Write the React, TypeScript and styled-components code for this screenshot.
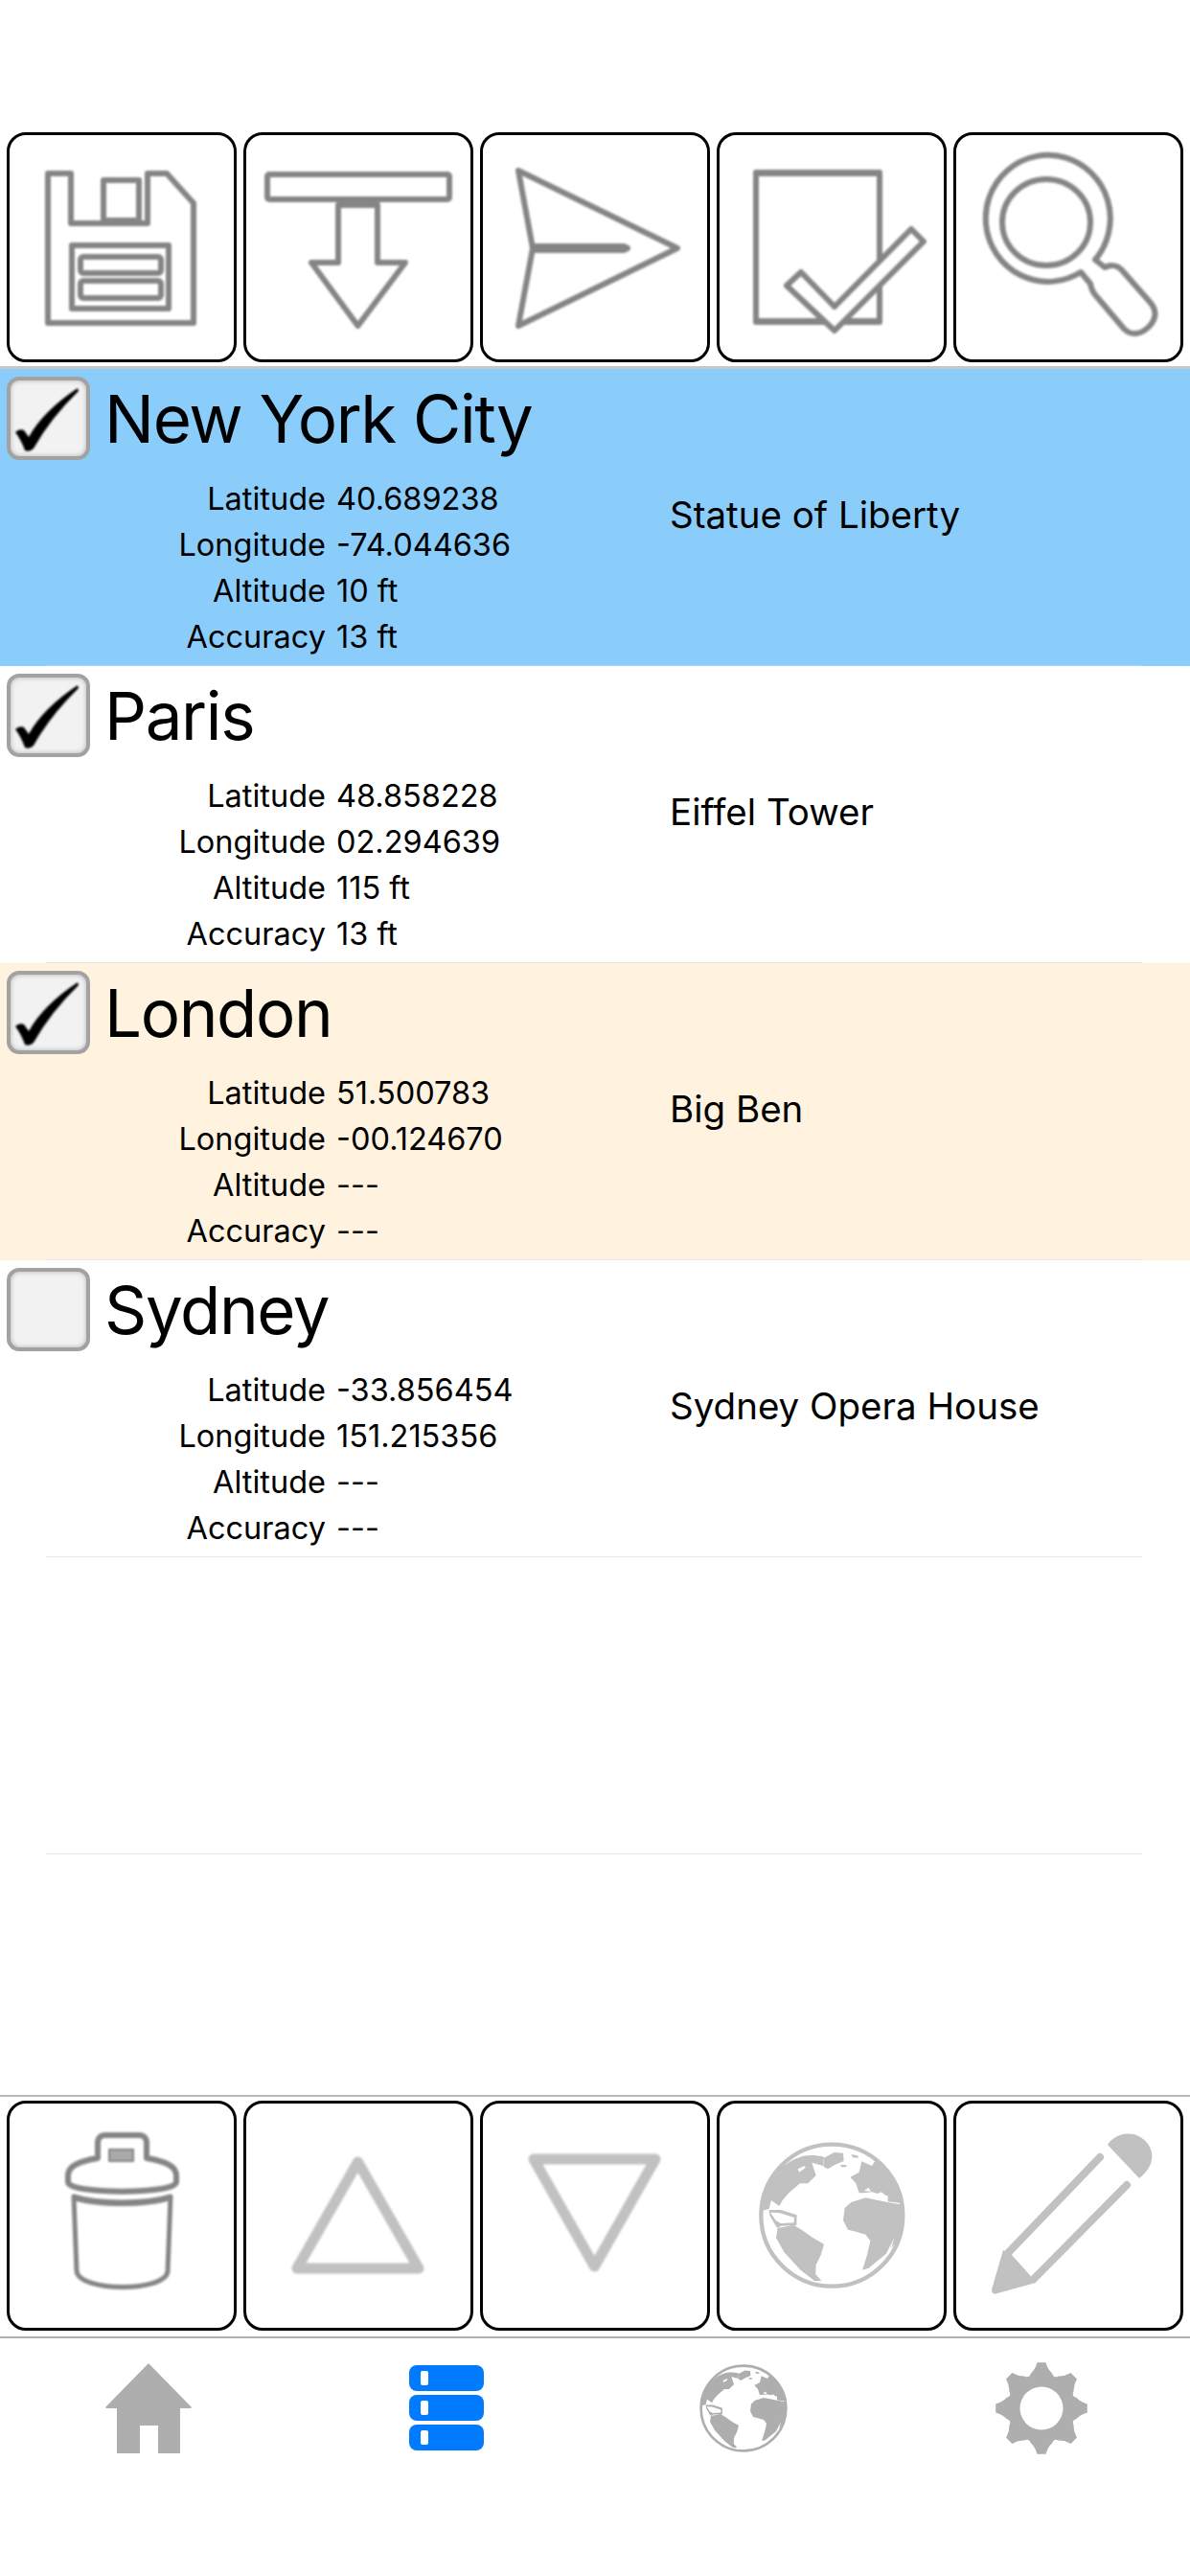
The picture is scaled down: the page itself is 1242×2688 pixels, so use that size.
import React from "react";
import styled, { createGlobalStyle } from "styled-components";

const Global = createGlobalStyle`
  html, body { margin: 0; padding: 0; background: #fff; }
  body { font-family: Inter, "Liberation Sans", sans-serif; color: #000; }
`;

const Page = styled.div`
  width: 1242px;
  height: 2688px;
  display: flex;
  flex-direction: column;
  background: #fff;
  overflow: hidden;
`;

const TopToolbar = styled.div`
  display: flex;
  gap: 7px;
  padding: 138px 7px 4px;
  border-bottom: 3px solid #c6c8c8;
`;

const BottomToolbar = styled.div`
  display: flex;
  gap: 7px;
  padding: 4px 7px 6px;
  border-top: 2px solid #b4bab8;
`;

const ToolButton = styled.button`
  width: 240px;
  height: 240px;
  padding: 0;
  flex: none;
  border: 3px solid #000;
  border-radius: 20px;
  background: #fff;
  display: block;
`;

const ToolIcon = styled.svg.attrs({ viewBox: "3 3 234 234" })<{ $soft?: number }>`
  display: block;
  width: 234px;
  height: 234px;
  filter: blur(${(p) => p.$soft ?? 1}px);
`;

const List = styled.div`
  flex: 1;
  display: flex;
  flex-direction: column;
`;

const Row = styled.div<{ $bg?: string }>`
  height: 310px;
  display: flex;
  flex-direction: column;
  background: ${(p) => p.$bg ?? "transparent"};
`;

const RowBody = styled.div`
  flex: 1;
`;

const RowDivider = styled.div<{ $tint?: string }>`
  height: 1px;
  margin: 0 50px 0 48px;
  background: ${(p) => p.$tint ?? "#e6e6e6"};
`;

const Header = styled.div`
  display: flex;
  align-items: center;
  gap: 15px;
  padding: 8px 0 0 7px;
  height: 87px;
`;

const CheckBox = styled.div`
  width: 87px;
  height: 87px;
  box-sizing: border-box;
  flex: none;
  border: 4px solid #a2a2a2;
  border-radius: 13px;
  background: #f2f2f2;
  box-shadow: inset 0 0 5px rgba(120, 120, 120, 0.55);
`;

const CheckMark = styled.svg.attrs({ viewBox: "4 4 79 79" })`
  display: block;
  width: 79px;
  height: 79px;
  filter: blur(0.8px);
`;

const Title = styled.div`
  font-size: 69px;
  line-height: 87px;
  padding-top: 2px;
  letter-spacing: -1.35px;
`;

const Details = styled.div`
  display: flex;
  padding-top: 16px;
`;

const Coords = styled.div`
  width: 699px;
  flex: none;
  display: grid;
  grid-template-columns: 340px 1fr;
  column-gap: 11px;
  grid-auto-rows: 48px;
  align-items: center;
  font-size: 32.5px;
`;

const Label = styled.div`
  text-align: right;
`;

const Value = styled.div``;

const Landmark = styled.div`
  font-size: 38.5px;
  line-height: 48px;
  padding-top: 17px;
`;

const TabBar = styled.div`
  display: grid;
  grid-template-columns: repeat(4, 1fr);
  height: 250px;
  padding-top: 25px;
  box-sizing: border-box;
  border-top: 2px solid #b0b0b0;
`;

const Tab = styled.div`
  display: flex;
  justify-content: center;
  align-items: flex-start;
`;

const TabIcon = styled.svg<{ $w: number; $h: number }>`
  display: block;
  width: ${(p) => p.$w}px;
  height: ${(p) => p.$h}px;
`;

const GRAY = "#858585";
const LIGHT = "#c1c1c1";
const TAB_GRAY = "#aeaeae";

const line = { fill: "#fff", stroke: GRAY, strokeWidth: 6, strokeLinejoin: "round" as const };

const SaveIcon = () => (
  <ToolIcon>
    <path {...line} d="M43 43 H67 V95 H147 V43 H167 L195 74 V199 H43 Z" />
    <rect {...line} x="101" y="50" width="37" height="42" />
    <rect {...line} x="68" y="118" width="101" height="66" />
    <rect {...line} x="77" y="130" width="84" height="17" rx="3" />
    <rect {...line} x="77" y="155" width="84" height="18" rx="3" />
  </ToolIcon>
);

const DownloadIcon = () => (
  <ToolIcon>
    <rect {...line} x="25" y="44" width="190" height="26" rx="2" />
    <rect x="98" y="69" width="44" height="9" fill={GRAY} />
    <path {...line} d="M99 76 H140 V136 H169 L119.5 202 L71 136 H99 Z" />
  </ToolIcon>
);

const SendIcon = () => (
  <ToolIcon>
    <path {...line} d="M40 40 L206 121 L40 202 L55 121 Z" />
    <path d="M55 119 H150 L154 121 L150 123 H55 Z" fill={GRAY} stroke={GRAY} strokeWidth="6" strokeLinejoin="round" />
  </ToolIcon>
);

const NoteCheckIcon = () => (
  <ToolIcon>
    <rect {...line} x="41" y="42" width="129" height="156" />
    <rect x="40" y="39" width="131" height="7" fill={GRAY} />
    <rect x="40" y="194" width="131" height="6" fill={GRAY} />
    <path {...line} d="M88 146 L73 160 L123 207 L216 114 L203 101 L123 182 Z" />
  </ToolIcon>
);

const SearchIcon = () => (
  <ToolIcon>
    <path
      {...line}
      d="M148 133 A65 66 0 1 0 133 146 L143 158 C144 164 146 168 150 172 L178 205 C186 213 196 211 204 203 C212 195 213 186 205 177 L176 144 C170 137 162 139 158 141 Z"
    />
    <ellipse {...line} cx="97" cy="94" rx="46" ry="45" />
  </ToolIcon>
);

const TrashIcon = () => (
  <ToolIcon>
    <path {...line} strokeWidth="5" d="M70 100 C95 108 145 108 171 100 L168 178 C166 200 76 200 73 178 Z" />
    <path d="M70 98 C95 106 145 106 171 98 L171 104 C145 112 95 112 70 104 Z" fill={GRAY} />
    <path {...line} d="M95 60 V44 C95 39 98 36 103 36 H138 C143 36 146 39 146 44 V60 C165 63 177 68 177 78 V85 C177 98 64 98 64 85 V78 C64 68 76 63 95 60 Z" />
    <rect x="107" y="51" width="25" height="12" fill="#aaa" stroke={GRAY} strokeWidth="2" />
  </ToolIcon>
);

const triangle = { fill: "none", stroke: LIGHT, strokeWidth: 11, strokeLinejoin: "round" as const };

const UpIcon = () => (
  <ToolIcon $soft={1.3}>
    <path {...triangle} d="M119.5 64 L183 175 H56 Z" />
  </ToolIcon>
);

const DownIcon = () => (
  <ToolIcon $soft={1.3}>
    <path {...triangle} d="M56 61 H183 L119.5 173 Z" />
  </ToolIcon>
);

const GlobeShapes = ({ color }: { color: string }) => (
  <g fill={color}>
    <circle cx="325" cy="305" r="222" fill="none" stroke={color} strokeWidth="13" />
    <path d="M222 124 C240 116 270 114 300 122 L297 150 L262 140 L275 180 L250 205 L225 205 L190 235 L170 258 L160 276 L135 258 L128 285 L102 292 C100 225 150 150 222 124 Z" />
    <path d="M300 125 L332 108 L360 110 L362 135 L335 146 L312 160 L298 152 Z" />
    <path d="M352 146 L372 148 L368 154 L354 154 Z" />
    <path d="M385 114 L405 118 L408 125 L390 124 Z" />
    <path d="M128 288 L165 288 L215 304 L214 336 L165 338 L155 345 L150 340 L130 305 Z" />
    <path d="M155 345 L205 335 L230 350 L265 375 L300 395 L290 430 L275 460 L274 490 L292 510 L270 510 L225 475 L175 420 L150 375 Z" />
    <path d="M418 136 L450 150 L462 132 L490 160 L520 200 L545 250 L548 268 L500 262 L500 244 L470 238 L450 232 L425 235 L410 235 L400 205 L382 185 L410 170 Z" />
    <path d="M360 320 L365 282 L385 264 L430 250 L470 258 L500 264 L548 272 C552 310 545 350 528 385 L510 410 L520 375 L495 425 L440 470 L420 476 L435 430 L445 385 L430 365 L395 355 L375 350 Z" />
    <path d="M132 296 L162 298 L207 312 L206 328 L165 330 L150 322 Z" fill="#fff" />
    <path d="M218 160 L240 150 L242 156 L222 170 Z" fill="#fff" />
    <path d="M425 228 L440 218 L447 230 Z" fill="#fff" />
    <path d="M460 240 L480 232 L500 250 L470 252 Z" fill="#fff" />
  </g>
);

const GlobeIcon = () => (
  <ToolIcon $soft={0.5}>
    <g transform="translate(12 18) scale(0.3333)">
      <GlobeShapes color={LIGHT} />
    </g>
  </ToolIcon>
);

const PencilIcon = () => (
  <ToolIcon $soft={0.4}>
    <path d="M161 46 C168 34 190 28 203 45 C212 58 206 72 194 81 Z" fill={LIGHT} />
    <path d="M153 59 L56 160 M181 88 L84 186" stroke={LIGHT} strokeWidth="8" strokeLinecap="round" fill="none" />
    <path d="M52 156 L40 197 Q40 203 46 201 L86 190 L79 181 L61 161 Z" fill={LIGHT} />
  </ToolIcon>
);

const Check = () => (
  <CheckMark>
    <path d="M9 58 Q13 54 18 56 L23 63 Q38 36 74 12 L75 15 Q46 43 28 75 Q24 79 19 77 Q15 66 9 58 Z" fill="#000" />
  </CheckMark>
);

function gearPath(cx: number, cy: number) {
  const pt = (r: number, a: number) =>
    `${(cx + r * Math.cos(a)).toFixed(2)} ${(cy + r * Math.sin(a)).toFixed(2)}`;
  const step = Math.PI / 4;
  let d = "";
  for (let i = 0; i < 8; i++) {
    const a = i * step - Math.PI / 2;
    const tipA = 0.095;
    d += `${i === 0 ? "M" : "L"}${pt(48, a - tipA)} L${pt(48, a + tipA)} `;
    d += `Q${pt(41, a + 0.16)} ${pt(38, a + 0.3)} Q${pt(33.5, a + step / 2)} ${pt(38, a + step - 0.3)} Q${pt(41, a + step - 0.16)} ${pt(48, a + step - tipA)} `;
  }
  d += `Z M${cx + 22.5} ${cy} A22.5 22.5 0 1 0 ${cx - 22.5} ${cy} A22.5 22.5 0 1 0 ${cx + 22.5} ${cy} Z`;
  return d;
}

type Place = {
  title: string;
  lat: string;
  lon: string;
  alt: string;
  acc: string;
  landmark: string;
  checked: boolean;
  bg?: string;
  divider?: string;
};

const places: Place[] = [
  { title: "New York City", lat: "40.689238", lon: "-74.044636", alt: "10 ft", acc: "13 ft", landmark: "Statue of Liberty", checked: true, bg: "#8acdfb", divider: "#a5d5f5" },
  { title: "Paris", lat: "48.858228", lon: "02.294639", alt: "115 ft", acc: "13 ft", landmark: "Eiffel Tower", checked: true },
  { title: "London", lat: "51.500783", lon: "-00.124670", alt: "---", acc: "---", landmark: "Big Ben", checked: true, bg: "#fff3e0" },
  { title: "Sydney", lat: "-33.856454", lon: "151.215356", alt: "---", acc: "---", landmark: "Sydney Opera House", checked: false },
];

export default function App() {
  return (
    <Page>
      <Global />
      <TopToolbar>
        <ToolButton><SaveIcon /></ToolButton>
        <ToolButton><DownloadIcon /></ToolButton>
        <ToolButton><SendIcon /></ToolButton>
        <ToolButton><NoteCheckIcon /></ToolButton>
        <ToolButton><SearchIcon /></ToolButton>
      </TopToolbar>
      <List>
        {places.map((p) => (
          <Row key={p.title} $bg={p.bg}>
            <RowBody>
              <Header>
                <CheckBox>{p.checked && <Check />}</CheckBox>
                <Title>{p.title}</Title>
              </Header>
              <Details>
                <Coords>
                  <Label>Latitude</Label>
                  <Value>{p.lat}</Value>
                  <Label>Longitude</Label>
                  <Value>{p.lon}</Value>
                  <Label>Altitude</Label>
                  <Value>{p.alt}</Value>
                  <Label>Accuracy</Label>
                  <Value>{p.acc}</Value>
                </Coords>
                <Landmark>{p.landmark}</Landmark>
              </Details>
            </RowBody>
            <RowDivider $tint={p.divider} />
          </Row>
        ))}
        <Row>
          <RowBody />
          <RowDivider />
        </Row>
      </List>
      <BottomToolbar>
        <ToolButton><TrashIcon /></ToolButton>
        <ToolButton><UpIcon /></ToolButton>
        <ToolButton><DownIcon /></ToolButton>
        <ToolButton><GlobeIcon /></ToolButton>
        <ToolButton><PencilIcon /></ToolButton>
      </BottomToolbar>
      <TabBar>
        <Tab>
          <TabIcon $w={92} $h={96} viewBox="0 0 92 96">
            <path d="M46 1 L91 47 Q91 48 89 48 H79 V95 H56 V66 H37 V95 H13 V48 H3 Q1 48 1 47 Z" fill={TAB_GRAY} />
          </TabIcon>
        </Tab>
        <Tab>
          <TabIcon $w={78} $h={92} viewBox="0 0 78 92">
            <g fill="#007aff">
              <rect x="0" y="3" width="78" height="27" rx="8" />
              <rect x="0" y="34" width="78" height="27" rx="8" />
              <rect x="0" y="65" width="78" height="27" rx="8" />
            </g>
            <g fill="#fff">
              <rect x="12" y="9" width="8" height="15" rx="2" />
              <rect x="12" y="40" width="8" height="15" rx="2" />
              <rect x="12" y="71" width="8" height="15" rx="2" />
            </g>
          </TabIcon>
        </Tab>
        <Tab>
          <TabIcon $w={96} $h={96} viewBox="0 0 96 96">
            <g transform="translate(48 48) scale(0.2) translate(-325 -305)">
              <GlobeShapes color={TAB_GRAY} />
            </g>
          </TabIcon>
        </Tab>
        <Tab>
          <TabIcon $w={98} $h={98} viewBox="0 0 98 98">
            <path d={gearPath(49, 48)} fill={TAB_GRAY} fillRule="evenodd" />
          </TabIcon>
        </Tab>
      </TabBar>
    </Page>
  );
}
